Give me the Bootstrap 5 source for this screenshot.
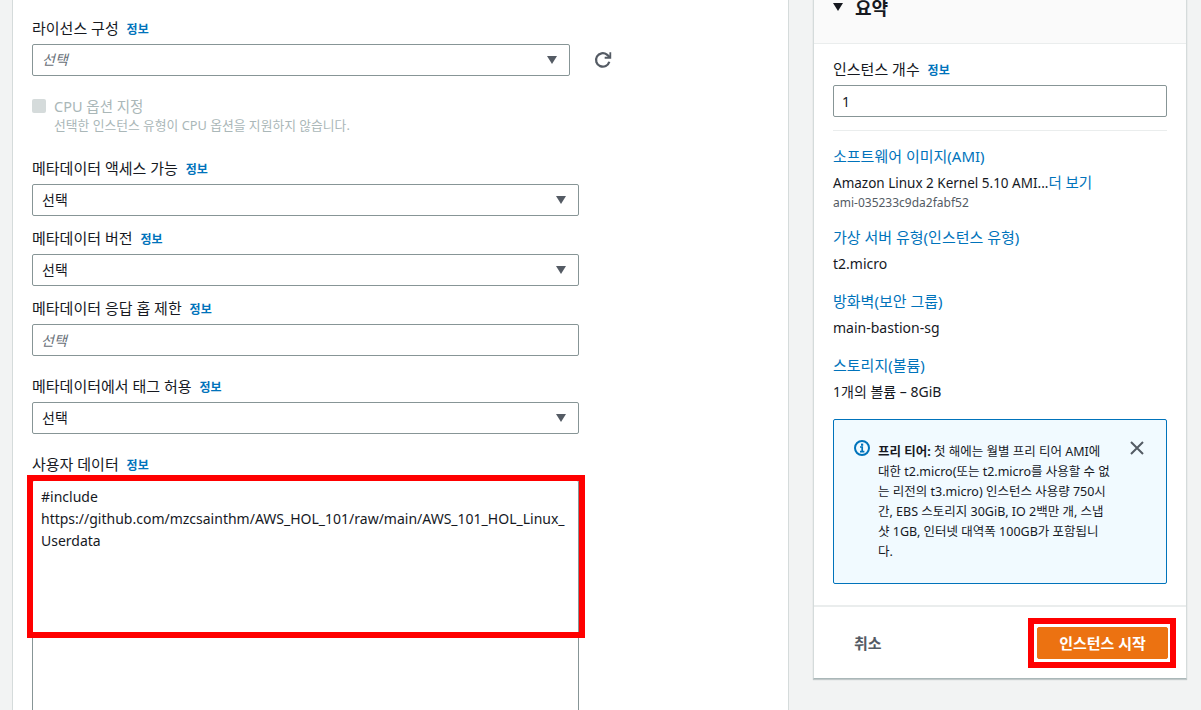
<!doctype html>
<html lang="ko">
<head>
<meta charset="utf-8">
<title>인스턴스 시작</title>
<link href="https://cdn.jsdelivr.net/npm/bootstrap@5.3.0/dist/css/bootstrap.min.css" rel="stylesheet">
<style>
html,body{height:710px;overflow:hidden}
body{background:#f2f3f3;color:#16191f;font-family:"Noto Sans","Noto Sans CJK KR",sans-serif;font-size:14px;line-height:22px}
.stage{margin-top:-10px;padding-left:12px;gap:24px;align-items:flex-start}
.main-panel{width:777px;height:720px;background:#fff;border-left:1px solid #d5dbdb;border-right:1px solid #d5dbdb;padding:27px 0 0 19px;flex:none;overflow:hidden}
.side-panel{width:374px;flex:none;background:#fff;border:1px solid #d5dbdb;border-top:0;border-bottom:1px solid #aab7b8;border-radius:0;box-shadow:0 1px 1px rgba(0,28,36,.2)}
.side-head{height:54px;padding:5px 20px 0 19px;background:#fafafa;border-bottom:1px solid #eaeded;gap:12px;font-size:18px;font-weight:700;line-height:26px}
.side-body{padding:14px 19px 21px 19px}
.fld-label{display:block;margin:0 0 3px;color:#16191f;line-height:22px;font-size:15px}
.info-link{color:#0073bb;font-size:12px;font-weight:700;text-decoration:none;margin-left:4px}
.aws-select,.aws-input{height:32px;border:1px solid #879596;border-radius:2px;font-size:14px;line-height:22px;padding:4px 30px 4px 9px;color:#16191f;box-shadow:none}
.aws-input{padding:4px 8px}
.aws-select{background-image:url("data:image/svg+xml,%3Csvg xmlns='http://www.w3.org/2000/svg' viewBox='0 0 12 10'%3E%3Cpath fill='%23545b64' d='M1 1h10L6 9z'/%3E%3C/svg%3E");background-size:12px 10px;background-position:right 11px center}
.w-short{width:538px}
.w-full{width:547px}
.is-ph{font-style:italic;color:#687078}
.is-ph::placeholder{color:#687078;opacity:1}
.mt-a{margin-top:11px}.mt-b{margin-top:19px}.mt-c{margin-top:24px}
.refresh-btn{width:18px;height:18px;margin-left:24px;color:#545b64}
.cpu-row{margin-top:20px;gap:8px}
.fake-check{width:14px;height:14px;margin-top:3px;background:#d5dbdb;border-radius:2px;flex:none}
.cpu-title{color:#aab7b8;line-height:20px;font-size:14.5px}
.cpu-help{color:#aab7b8;font-size:12.8px;line-height:16px;margin-top:1px}
.ud-wrap{width:547px;margin-top:0}
.ud-area{width:547px;height:300px;border:1px solid #879596;border-radius:2px;padding:5px 8px;font-size:14px;line-height:22px;color:#16191f;resize:none;overflow:hidden;box-shadow:none}
.red-area{position:absolute;left:-5px;top:-5px;width:558px;height:163px;border:6px solid #f00;pointer-events:none}
.aws-link{color:#0073bb;line-height:22px;display:block;text-decoration:none;font-size:15px}
.plain-line{margin-top:5px;color:#16191f;line-height:22px}
.rule-line{height:1px;background:#eaeded;margin:13px 0 14px;border:0;opacity:1}
.s-a{margin-top:15px}.s-b{margin-top:15px}
.ami-name{margin-top:4px;line-height:22px;font-size:13.5px}
.more-link{color:#0073bb;text-decoration:none;font-size:14.5px}
.ami-id{font-size:12px;line-height:16px;color:#545b64;margin-top:1px}
.tier-box{margin:16px 0 0;height:165px;padding:20px 16px 0 20px;background:#f1faff;border:1px solid #0073bb;border-radius:2px;gap:8px;font-size:12.5px;line-height:20px;color:#16191f}
.tier-text{white-space:nowrap;width:236px;margin-top:2px}
.tier-close{width:16px;height:16px;margin-left:7px;color:#545b64;flex:none}
.side-foot{height:73px;border-top:2px solid #eaeded;padding:0 18px 0 40px}
.cancel-txt{color:#545b64;font-weight:700;font-size:15px}
.launch-wrap{width:131px;height:32px}
.launch-btn{width:131px;height:32px;padding:0;background:#ec7211;border:1px solid #ec7211;border-radius:2px;color:#fff;font-weight:700;font-size:15px;line-height:20px}
.launch-btn:hover{background:#eb5f07;color:#fff}
.red-btn{position:absolute;left:-9px;top:-9px;width:148px;height:50px;border:6px solid #f00;pointer-events:none}
</style>
</head>
<body>
<div class="d-flex stage">
  <main class="main-panel">
    <label class="fld-label">라이선스 구성 <a class="info-link" href="#">정보</a></label>
    <div class="d-flex align-items-center">
      <select class="form-select aws-select is-ph w-short"><option>선택</option></select>
      <svg class="refresh-btn" viewBox="0 0 16 16" fill="none" stroke="currentColor" stroke-width="2"><path d="M13.6 9.5A6 6 0 1 1 11.5 3.2L14 5.5"/><path d="M14.5 1v5h-5" stroke-width="1.6"/></svg>
    </div>
    <div class="d-flex cpu-row">
      <span class="fake-check"></span>
      <div>
        <div class="cpu-title">CPU 옵션 지정</div>
        <div class="cpu-help">선택한 인스턴스 유형이 CPU 옵션을 지원하지 않습니다.</div>
      </div>
    </div>
    <label class="fld-label mt-c">메타데이터 액세스 가능 <a class="info-link" href="#">정보</a></label>
    <select class="form-select aws-select w-full"><option>선택</option></select>
    <label class="fld-label mt-a">메타데이터 버전 <a class="info-link" href="#">정보</a></label>
    <select class="form-select aws-select w-full"><option>선택</option></select>
    <label class="fld-label mt-a">메타데이터 응답 홉 제한 <a class="info-link" href="#">정보</a></label>
    <input class="form-control aws-input is-ph w-full" placeholder="선택">
    <label class="fld-label mt-b">메타데이터에서 태그 허용 <a class="info-link" href="#">정보</a></label>
    <select class="form-select aws-select w-full"><option>선택</option></select>
    <label class="fld-label mt-b">사용자 데이터 <a class="info-link" href="#">정보</a></label>
    <div class="position-relative ud-wrap">
      <textarea class="form-control ud-area">#include
https://github.com/mzcsainthm/AWS_HOL_101/raw/main/AWS_101_HOL_Linux_
Userdata</textarea>
      <div class="red-area"></div>
    </div>
  </main>
  <aside class="side-panel">
    <div class="d-flex side-head">
      <svg width="10" height="8" viewBox="0 0 10 8" class="mt-2"><path fill="#16191f" d="M0 0h10L5 8z"/></svg>
      <span>요약</span>
    </div>
    <div class="side-body">
      <label class="fld-label">인스턴스 개수 <a class="info-link" href="#">정보</a></label>
      <input class="form-control aws-input" value="1">
      <hr class="rule-line">
      <a class="aws-link" href="#">소프트웨어 이미지(AMI)</a>
      <div class="ami-name">Amazon Linux 2 Kernel 5.10 AMI...<a href="#" class="more-link">더 보기</a></div>
      <div class="ami-id">ami-035233c9da2fabf52</div>
      <a class="aws-link s-a" href="#">가상 서버 유형(인스턴스 유형)</a>
      <div class="plain-line">t2.micro</div>
      <a class="aws-link s-b" href="#">방화벽(보안 그룹)</a>
      <div class="plain-line">main-bastion-sg</div>
      <a class="aws-link s-b" href="#">스토리지(볼륨)</a>
      <div class="plain-line">1개의 볼륨 – 8GiB</div>
      <div class="d-flex tier-box">
        <svg width="16" height="16" viewBox="0 0 16 16" class="flex-shrink-0" fill="none"><circle cx="8" cy="8" r="7" stroke="#0073bb" stroke-width="2"/><rect x="7" y="3.6" width="2.2" height="2.2" fill="#0073bb"/><path d="M6 7h2.2v4.2M6 11.6h4.4" stroke="#0073bb" stroke-width="1.7"/></svg>
        <div class="tier-text"><b>프리 티어:</b> 첫 해에는 월별 프리 티어 AMI에<br>대한 t2.micro(또는 t2.micro를 사용할 수 없<br>는 리전의 t3.micro) 인스턴스 사용량 750시<br>간, EBS 스토리지 30GiB, IO 2백만 개, 스냅<br>샷 1GB, 인터넷 대역폭 100GB가 포함됩니<br>다.</div>
        <svg class="tier-close" viewBox="0 0 16 16" fill="none" stroke="currentColor" stroke-width="2"><path d="M2 2l12 12M14 2L2 14"/></svg>
      </div>
    </div>
    <div class="d-flex justify-content-between align-items-center side-foot">
      <span class="cancel-txt">취소</span>
      <div class="position-relative launch-wrap">
        <button class="btn launch-btn">인스턴스 시작</button>
        <div class="red-btn"></div>
      </div>
    </div>
  </aside>
</div>
</body>
</html>
